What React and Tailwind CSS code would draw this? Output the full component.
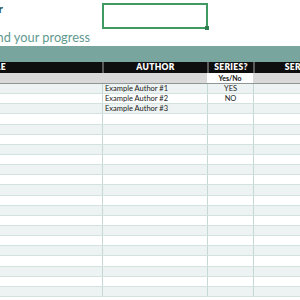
const rows = [
  { author: 'Example Author #1', series: 'YES' },
  { author: 'Example Author #2', series: 'NO' },
  { author: 'Example Author #3', series: '' },
  ...Array.from({ length: 18 }, () => ({ author: '', series: '' })),
]

const font = { fontFamily: '"Lato", "Open Sans", sans-serif' }

export default function App() {
  return (
    <div className="h-[300px] w-[300px] overflow-hidden bg-white" style={font}>
      <div className="ml-[-114px] w-[520px]">
        {/* top area */}
        <div className="flex h-[46px]">
          <div className="flex w-[204px] flex-col items-end overflow-hidden">
            <div className="mr-[87px] mt-[3px] whitespace-nowrap text-[12px] font-bold leading-[12px] text-[#2e5953]">Reading Tracker</div>
            <div className="mt-[15px] whitespace-nowrap text-[12.8px] leading-[14px] text-[#5f9990]">
              Keep track of books and your progress
            </div>
          </div>
          <div className="ml-[12px] mt-[3px]">
            <div className="relative h-[26px] w-[106px] border-2 border-[#3f9b62]">
              <div className="absolute bottom-[-3px] right-[-3px] h-[4px] w-[4px] bg-[#2f7d4c]" />
            </div>
          </div>
        </div>

        {/* teal band */}
        <div className="h-[16px] bg-[#78a69f]" />

        {/* black header */}
        <div className="flex h-[11px] bg-[#0e0e0e] text-[8.5px] font-extrabold leading-[11px] tracking-[0.3px] text-white">
          <div className="w-[216px] text-center">TITLE</div>
          <div className="w-[105px] border-l-2 border-[#5a5a5a] text-center">AUTHOR</div>
          <div className="w-[46px] border-l-2 border-[#5a5a5a] text-center">SERIES?</div>
          <div className="w-[120px] border-l-2 border-[#5a5a5a] text-center">SERIES NAME</div>
        </div>

        {/* sub header */}
        <div className="flex h-[11px] border-b border-[#8f9695] bg-[#d9d9d9] text-[7px] font-bold leading-[10px] text-[#111]">
          <div className="w-[216px]" />
          <div className="w-[105px]" />
          <div className="w-[46px] bg-white text-center">Yes/No</div>
          <div className="w-[120px]" />
        </div>

        {/* data rows */}
        {rows.map((row, i) => (
          <div
            key={i}
            className={`flex h-[10.15px] border-b border-[#d3e2df] text-[7.5px] leading-[9px] text-[#1a1a1a] ${
              i % 2 === 0 ? 'bg-[#edf3f2]' : 'bg-white'
            }`}
          >
            <div className="w-[216px]" />
            <div className="w-[105px] border-l border-[#c5d8d4] pl-[2px]">{row.author}</div>
            <div className="w-[46px] border-l border-[#c5d8d4] text-center">{row.series}</div>
            <div className="w-[120px] border-l border-[#c5d8d4]" />
          </div>
        ))}
      </div>
    </div>
  )
}
